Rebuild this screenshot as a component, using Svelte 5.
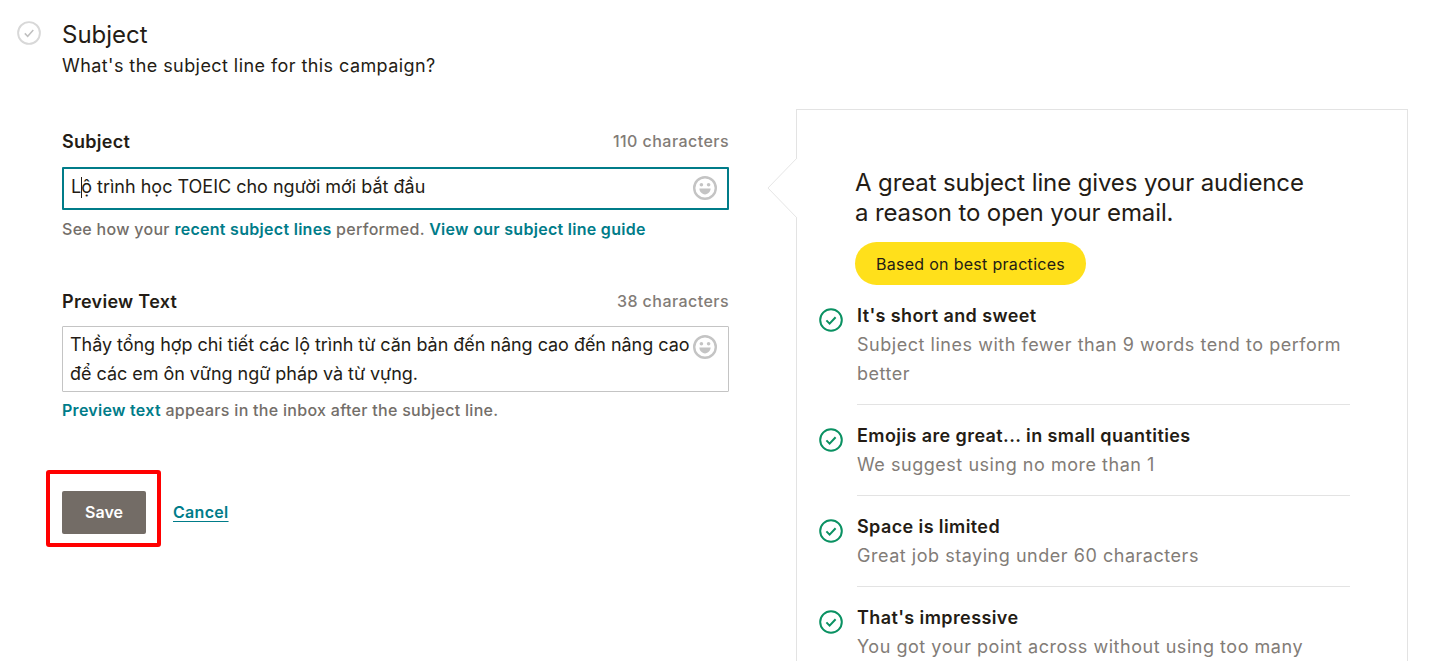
<script>
  const tips = [
    { title: "It's short and sweet", desc: 'Subject lines with fewer than 9 words tend to perform better' },
    { title: 'Emojis are great... in small quantities', desc: 'We suggest using no more than 1' },
    { title: 'Space is limited', desc: 'Great job staying under 60 characters' },
    { title: "That's impressive", desc: 'You got your point across without using too many punctuation marks' }
  ];
</script>

{#snippet smiley()}
  <svg class="smiley" viewBox="0 0 24 24" width="24" height="24" aria-hidden="true">
    <circle cx="12" cy="12" r="10.8" fill="none" stroke="#c4c4c4" stroke-width="2.4" />
    <circle cx="8.4" cy="8.8" r="1.8" fill="#c4c4c4" />
    <circle cx="15.6" cy="8.8" r="1.8" fill="#c4c4c4" />
    <path d="M6.4 12.6h11.2c0 3.2-2.5 5.8-5.6 5.8s-5.6-2.6-5.6-5.8z" fill="#c4c4c4" />
  </svg>
{/snippet}

<div class="page">
  <section class="main">
    <svg class="step" viewBox="0 0 24 24" width="24" height="24" aria-hidden="true">
      <circle cx="12" cy="12" r="10.9" fill="none" stroke="#d8d8d8" stroke-width="1.9" />
      <path d="M7.8 12.4l2.9 2.9 5.6-6.2" fill="none" stroke="#c0c0c0" stroke-width="1.5" />
    </svg>
    <div class="col">
      <h1>Subject</h1>
      <p class="lead">What's the subject line for this campaign?</p>

      <div class="field first">
        <div class="labels"><span class="label">Subject</span><span class="count">110 characters</span></div>
        <div class="box active">
          <span class="value"><span class="caret-l">L</span><span class="caret"></span>ộ trình học TOEIC cho người mới bắt đầu</span>
          {@render smiley()}
        </div>
        <p class="help">See how your <a href="#a">recent subject lines</a> performed. <a href="#b">View our subject line guide</a></p>
      </div>

      <div class="field second">
        <div class="labels"><span class="label">Preview Text</span><span class="count">38 characters</span></div>
        <div class="box area">
          <span class="value">Thầy tổng hợp chi tiết các lộ trình từ căn bản đến nâng cao đến nâng cao<br />để các em ôn vững ngữ pháp và từ vựng.</span>
          {@render smiley()}
        </div>
        <p class="help tight"><a href="#c">Preview text</a> appears in the inbox after the subject line.</p>
      </div>

      <div class="actions">
        <div class="mark"><button type="button">Save</button></div>
        <a class="cancel" href="#d">Cancel</a>
      </div>
    </div>
  </section>

  <aside class="panel">
    <svg class="notch" viewBox="0 0 32 64" width="32" height="64" aria-hidden="true">
      <path d="M31 1L2 31l29 30" fill="#fff" stroke="#e6e6e6" stroke-width="1" />
    </svg>
    <h2>A great subject line gives your audience<br />a reason to open your email.</h2>
    <span class="pill">Based on best practices</span>
    <ul>
      {#each tips as tip}
        <li>
          <svg class="ok" viewBox="0 0 24 24" width="24" height="24" aria-hidden="true">
            <circle cx="12" cy="12" r="10.8" fill="none" stroke="#0a9162" stroke-width="2" />
            <path d="M7.4 12.4l3.2 3.2 6-6.4" fill="none" stroke="#0a9162" stroke-width="2" />
          </svg>
          <div class="tip">
            <h3>{tip.title}</h3>
            <p>{tip.desc}</p>
          </div>
        </li>
      {/each}
    </ul>
  </aside>
</div>

<style>
  :global(body) {
    margin: 0;
    background: #fff;
    overflow: hidden;
  }
  .page {
    height: 661px;
    overflow: hidden;
    display: flex;
    align-items: flex-start;
    font-family: "Inter", "Liberation Sans", sans-serif;
    color: #241c15;
  }
  .main {
    width: 796px;
    flex: none;
    display: flex;
    align-items: flex-start;
    padding: 21px 0 0 17px;
    box-sizing: border-box;
  }
  .step { flex: none; margin-right: 21px; }
  .col { width: 667px; flex: none; }
  h1 {
    margin: 0;
    font-size: 24px;
    line-height: 28px;
    font-weight: 400;
  }
  .lead {
    margin: 4px 0 0;
    font-size: 18px;
    line-height: 26px;
    letter-spacing: 0.43px;
  }
  .field.first { margin-top: 51px; }
  .field.second { margin-top: 49px; }
  .labels {
    display: flex;
    justify-content: space-between;
    align-items: flex-start;
    line-height: 24px;
  }
  .label { font-size: 18px; font-weight: 600; letter-spacing: 0.3px; }
  .count { font-size: 16px; line-height: 22px; font-weight: 500; color: #827c77; letter-spacing: 0.45px; }
  .box {
    margin-top: 13px;
    box-sizing: border-box;
    border: 1px solid #c4c4c4;
    border-radius: 1px;
    display: flex;
    justify-content: space-between;
    align-items: flex-start;
    padding: 3px 11px 0 7px;
    font-size: 18px;
    line-height: 29px;
  }
  .box.active {
    height: 43px;
    border: 2px solid #007c89;
    padding: 3px 10px 0 7px;
  }
  .box.area { height: 66px; margin-top: 12px; letter-spacing: -0.04px; }
  .value { white-space: nowrap; }
  .caret {
    display: inline-block;
    width: 1px;
    height: 21px;
    background: #241c15;
    vertical-align: -5px;
    margin-right: -1px;
  }
  .smiley { flex: none; margin-top: 4px; }
  .box.area .smiley { margin-top: 5px; margin-right: 0; }
  .help {
    margin: 7px 0 0;
    font-size: 16px;
    line-height: 24px;
    font-weight: 500;
    color: #736e69;
    letter-spacing: 0.29px;
  }
  .help.tight { margin-top: 6px; }
  .help a {
    color: #007c89;
    font-weight: 600;
    text-decoration: none;
  }
  .actions {
    margin-top: 48px;
    margin-left: -16px;
    display: flex;
    align-items: center;
  }
  .mark {
    border: 4px solid #f00;
    border-radius: 3px;
    padding: 17px 11px 9px 12px;
    display: flex;
  }
  button {
    width: 84px;
    height: 43px;
    border: 0;
    border-radius: 2px;
    padding: 0 0 2px;
    background: #736c66;
    color: #fff;
    font: 600 16px "Inter", "Liberation Sans", sans-serif;
  }
  .cancel {
    margin-left: 12px;
    color: #007c89;
    font-size: 16px;
    font-weight: 600;
    letter-spacing: 0.3px;
    text-decoration: underline;
    text-underline-offset: 3px;
    position: relative;
    top: 3px;
  }
  .panel {
    position: relative;
    margin-top: 109px;
    width: 612px;
    height: 640px;
    flex: none;
    box-sizing: border-box;
    border: 1px solid #e3e3e3;
    padding: 58px 0 0 58px;
  }
  .notch {
    position: absolute;
    left: -31px;
    top: 47px;
  }
  h2 {
    margin: 0;
    font-size: 24px;
    line-height: 30px;
    font-weight: 400;
    letter-spacing: -0.12px;
  }
  .pill {
    display: inline-block;
    margin-top: 14px;
    width: 231px;
    height: 43px;
    box-sizing: border-box;
    text-align: center;
    border-radius: 22px;
    background: #ffe01b;
    font-size: 16px;
    line-height: 45px;
    letter-spacing: 0.3px;
  }
  ul {
    list-style: none;
    margin: 16px 0 0 -36px;
    padding: 0;
    width: 531px;
  }
  li { display: flex; align-items: flex-start; }
  .ok { flex: none; margin: 7px 14px 0 0; }
  .tip {
    flex: 1;
    border-bottom: 1px solid #e3e3e3;
    padding-bottom: 16px;
    margin-bottom: 16px;
  }
  li:last-child .tip { border-bottom: 0; }
  h3 {
    margin: 0 0 -1px;
    font-size: 18px;
    line-height: 30px;
    font-weight: 600;
    letter-spacing: 0.4px;
  }
  .tip p {
    margin: 0;
    font-size: 18px;
    line-height: 29px;
    color: #827c77;
    letter-spacing: 0.53px;
  }
</style>
